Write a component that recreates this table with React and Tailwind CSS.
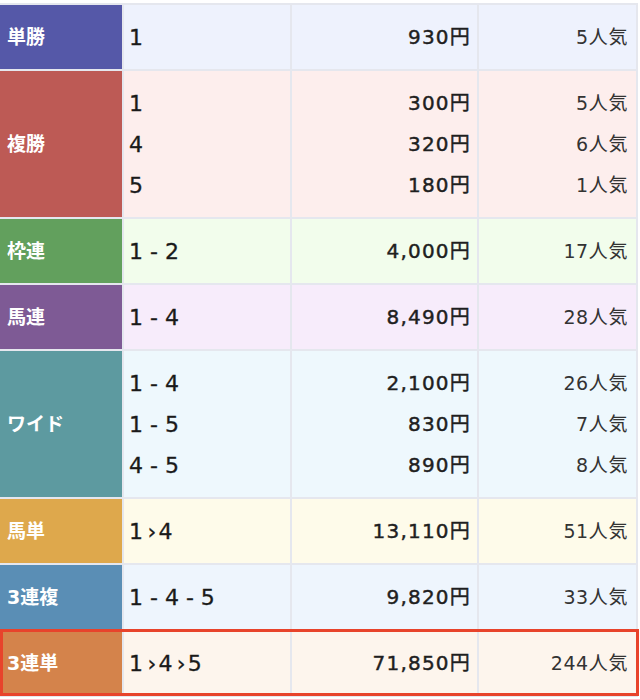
import React from 'react';

const rows = [
  { label: '単勝', head: 'bg-[#5558a8]', bg: 'bg-[#eef2fd]', items: [['1', '930円', '5人気']] },
  {
    label: '複勝', head: 'bg-[#bd5a55]', bg: 'bg-[#fdeeed]',
    items: [['1', '300円', '5人気'], ['4', '320円', '6人気'], ['5', '180円', '1人気']]
  },
  { label: '枠連', head: 'bg-[#62a05d]', bg: 'bg-[#f2fdec]', items: [['1 - 2', '4,000円', '17人気']] },
  { label: '馬連', head: 'bg-[#7e5a95]', bg: 'bg-[#f7ecfb]', items: [['1 - 4', '8,490円', '28人気']] },
  {
    label: 'ワイド', head: 'bg-[#5d9aa0]', bg: 'bg-[#eef8fd]',
    items: [['1 - 4', '2,100円', '26人気'], ['1 - 5', '830円', '7人気'], ['4 - 5', '890円', '8人気']]
  },
  { label: '馬単', head: 'bg-[#dea84c]', bg: 'bg-[#fefbea]', items: [['1\u2009›\u200a4', '13,110円', '51人気']] },
  { label: '3連複', head: 'bg-[#5a8eb5]', bg: 'bg-[#eef5fd]', items: [['1 - 4 - 5', '9,820円', '33人気']] },
  {
    label: '3連単', head: 'bg-[#d4834b]', bg: 'bg-[#fdf5ed]',
    items: [['1\u2009›\u200a4\u2009›\u200a5', '71,850円', '244人気']], hit: true
  }
];

function Row({ row }) {
  const multi = row.items.length > 1;
  return (
    <div className={`relative flex border-b-2 border-[#e5e7ee] ${multi ? 'h-[148px]' : 'h-[66px]'}`}>
      <div className={`w-[122px] shrink-0 flex items-center pl-[7px] text-white font-bold text-[19px] ${row.head}`}>
        {row.label}
      </div>
      <div className={`flex flex-1 ${row.bg}`}>
        <div className="w-[168px] shrink-0 border-l-2 border-[#e5e7ee] flex flex-col justify-center pl-[5px] text-[22px] text-[#1a1a1a] [-webkit-text-stroke:0.3px]">
          {row.items.map((it, i) => (
            <div key={i} className="h-[41px] leading-[41px] whitespace-pre">{it[0]}</div>
          ))}
        </div>
        <div className="w-[187px] shrink-0 border-l-2 border-[#e5e7ee] flex flex-col justify-center items-end pr-[6px] text-[20px] tracking-[1.2px] text-[#1f1f1f] [-webkit-text-stroke:0.45px]">
          {row.items.map((it, i) => (
            <div key={i} className="h-[41px] leading-[41px]">{it[1]}</div>
          ))}
        </div>
        <div className="flex-1 border-l-2 border-r-2 border-[#e5e7ee] flex flex-col justify-center items-end pr-[8px] text-[19px] tracking-[0.6px] text-[#333]">
          {row.items.map((it, i) => (
            <div key={i} className="h-[41px] leading-[41px]">{it[2]}</div>
          ))}
        </div>
      </div>
      {row.hit && (
        <div className="absolute left-0 right-[-1px] top-[-2px] bottom-[-1px] border-[3px] border-[#e8432b] pointer-events-none" />
      )}
    </div>
  );
}

export default function App() {
  return (
    <div className="w-[640px] h-[699px] bg-white pt-[3px] pr-[2px] overflow-hidden" style={{ fontFamily: '"DejaVu Sans", "Noto Sans CJK JP", sans-serif' }}>
      <div className="border-t-2 border-[#e5e7ee]">
        {rows.map((row) => (
          <Row key={row.label} row={row} />
        ))}
      </div>
    </div>
  );
}
